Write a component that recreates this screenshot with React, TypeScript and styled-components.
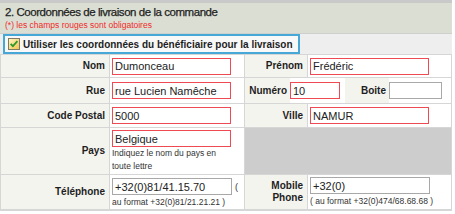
import React from "react";
import styled, { createGlobalStyle } from "styled-components";

const GlobalStyle = createGlobalStyle`
  html, body { margin: 0; padding: 0; background: #ffffff; }
  body { font-family: "Liberation Sans", Arial, sans-serif; color: #222; }
`;

const Wrapper = styled.div`
  width: 452px;
`;

const TopBand = styled.div`
  height: 3px;
  background: #c9c9c9;
`;

const Header = styled.div`
  height: 30px;
  background: #dbdfd3;
  padding: 2px 5px 0;
  box-sizing: border-box;
  display: flex;
  flex-direction: column;
`;

const Title = styled.div`
  font-size: 11.5px;
  line-height: 14px;
  letter-spacing: -0.45px;
  color: #1e1e1e;
  -webkit-text-stroke: 0.25px #1e1e1e;
`;

const Notice = styled.div`
  font-size: 8.5px;
  line-height: 11px;
  margin-top: 1px;
  color: #ee2a2a;
`;

const CheckBar = styled.div`
  border-top: 1px solid #cfcfcf;
  background: #eeeeee;
  height: 20px;
  padding: 0 3px;
  display: flex;
  align-items: stretch;
`;

const CheckBox = styled.label`
  display: inline-flex;
  align-items: center;
  gap: 3px;
  box-sizing: border-box;
  height: 20px;
  padding: 0 5px 0 3px;
  border: 2px solid #45a8d6;
  background: #f8f8f8;
  font-size: 10px;
  font-weight: bold;
  color: #1e1e1e;
`;

const Grid = styled.div`
  display: grid;
  grid-template-columns: 108px 134px 62px 143px;
  grid-template-rows: 22px 25px 23px 46px 34px;
  gap: 1px;
  padding: 1px 1px 2px;
  background: #d6d6d6;
`;

const Label = styled.div<{ $top?: boolean }>`
  background: #f4f4ef;
  display: flex;
  align-items: center;
  justify-content: flex-end;
  text-align: right;
  padding-right: 4px;
  font-size: 10px;
  font-weight: bold;
  line-height: 12px;
  color: #1e1e1e;
`;

const Cell = styled.div<{ $stack?: boolean; $pt?: number }>`
  background: #ffffff;
  display: flex;
  flex-direction: ${(p) => (p.$stack ? "column" : "row")};
  align-items: ${(p) => (p.$stack ? "flex-start" : "center")};
  padding-left: 2px;
  padding-top: ${(p) => p.$pt ?? 0}px;
  box-sizing: border-box;
`;

const SplitCell = styled.div`
  grid-column: span 2;
  display: grid;
  grid-template-columns: 45px 55px 44px 59px;
  background: #ffffff;
`;

const MiniLabel = styled.div`
  background: #f4f4ef;
  display: flex;
  align-items: center;
  justify-content: flex-end;
  padding-right: 3px;
  font-size: 10px;
  font-weight: bold;
  color: #1e1e1e;
`;

const MiniCell = styled.div`
  display: flex;
  align-items: center;
`;

const Filler = styled.div`
  grid-column: span 2;
  background: #cdcdcd;
`;

const Field = styled.input<{ $required?: boolean; $w?: number }>`
  box-sizing: border-box;
  width: ${(p) => p.$w ?? 119}px;
  height: 17px;
  margin: 0;
  padding: 0 2px;
  border: 1px solid ${(p) => (p.$required ? "#ee4a54" : "#a8a8a8")};
  background: #ffffff;
  font-family: "Liberation Sans", Arial, sans-serif;
  font-size: 11px;
  color: #222;
  outline: none;
`;

const InlineRow = styled.div`
  display: flex;
  align-items: center;
  gap: 3px;
  font-size: 9px;
  color: #333;
`;

const Help = styled.div<{ $mt?: number; $w?: number }>`
  font-size: 8.5px;
  line-height: 12.5px;
  color: #333;
  margin-top: ${(p) => p.$mt ?? 0}px;
  max-width: ${(p) => p.$w ?? 200}px;
`;

const CheckIcon = () => (
  <svg width="12" height="12" viewBox="0 0 12 12">
    <defs>
      <linearGradient id="cb" x1="0" y1="0" x2="1" y2="1">
        <stop offset="0" stopColor="#fff6c8" />
        <stop offset="1" stopColor="#f2c24a" />
      </linearGradient>
    </defs>
    <rect x="0.5" y="0.5" width="11" height="11" fill="url(#cb)" stroke="#7c7b66" />
    <path d="M2.6 5.8 L4.9 8.2 L9.4 3.2" fill="none" stroke="#2f9a2a" strokeWidth="1.8" />
  </svg>
);

export default function App() {
  return (
    <Wrapper>
      <GlobalStyle />
      <TopBand />
      <Header>
        <Title>2. Coordonnées de livraison de la commande</Title>
        <Notice>(*) les champs rouges sont obligatoires</Notice>
      </Header>
      <CheckBar>
        <CheckBox>
          <CheckIcon />
          Utiliser les coordonnées du bénéficiaire pour la livraison
        </CheckBox>
      </CheckBar>
      <Grid>
        <Label>Nom</Label>
        <Cell>
          <Field $required readOnly value="Dumonceau" />
        </Cell>
        <Label>Prénom</Label>
        <Cell>
          <Field $required readOnly value="Frédéric" />
        </Cell>

        <Label>Rue</Label>
        <Cell>
          <Field $required readOnly value="rue Lucien Namêche" />
        </Cell>
        <SplitCell>
          <MiniLabel>Numéro</MiniLabel>
          <MiniCell>
            <Field $required $w={50} readOnly value="10" />
          </MiniCell>
          <MiniLabel>Boite</MiniLabel>
          <MiniCell>
            <Field $w={53} readOnly value="" />
          </MiniCell>
        </SplitCell>

        <Label>Code Postal</Label>
        <Cell>
          <Field $required readOnly value="5000" />
        </Cell>
        <Label>Ville</Label>
        <Cell>
          <Field $required readOnly value="NAMUR" />
        </Cell>

        <Label>Pays</Label>
        <Cell $stack $pt={2}>
          <Field $required readOnly value="Belgique" />
          <Help $w={120}>Indiquez le nom du pays en toute lettre</Help>
        </Cell>
        <Filler />

        <Label>Téléphone</Label>
        <Cell $stack $pt={3}>
          <InlineRow>
            <Field $w={120} readOnly value="+32(0)81/41.15.70" />
            <span>(</span>
          </InlineRow>
          <Help $mt={1}>au format +32(0)81/21.21.21 )</Help>
        </Cell>
        <Label>
          Mobile
          <br />
          Phone
        </Label>
        <Cell $stack $pt={2}>
          <Field $w={120} readOnly value="+32(0)" />
          <Help $mt={1}>( au format +32(0)474/68.68.68 )</Help>
        </Cell>
      </Grid>
    </Wrapper>
  );
}
